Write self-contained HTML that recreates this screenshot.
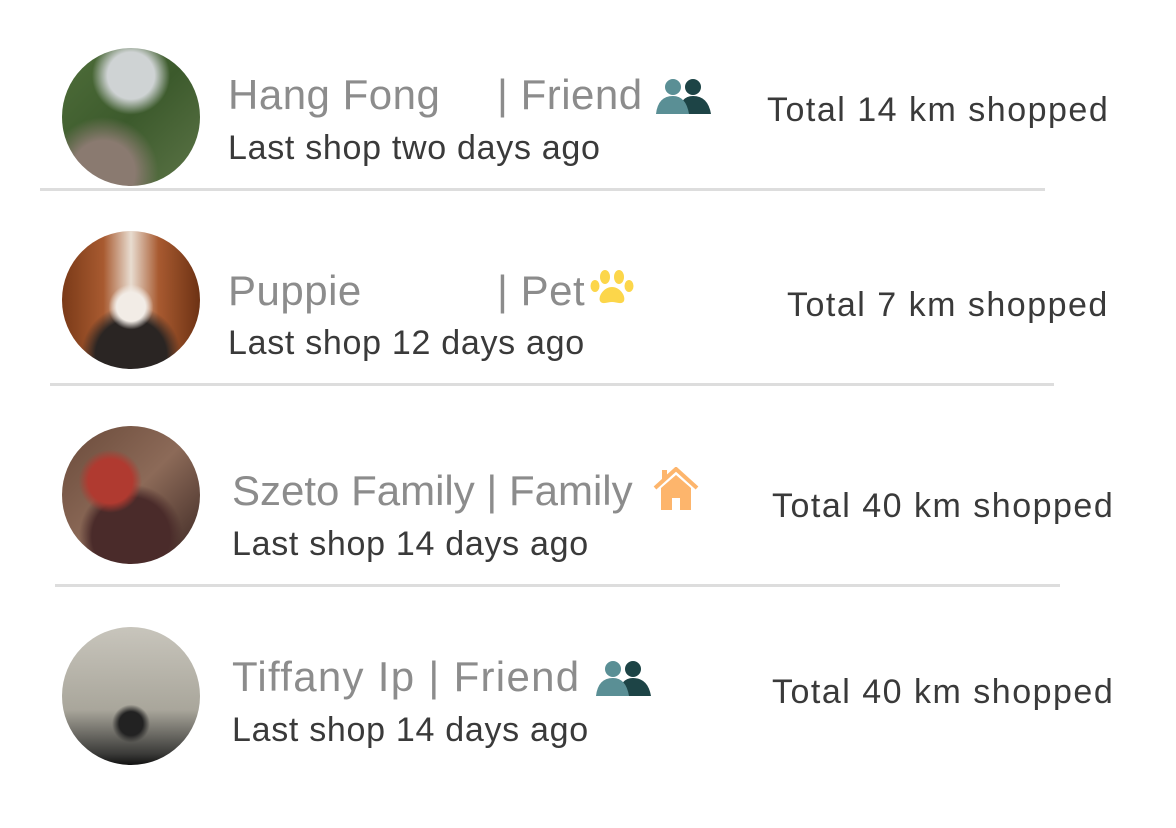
<!DOCTYPE html>
<html><head><meta charset="utf-8"><style>
body{margin:0;width:1176px;height:828px;background:#fff;position:relative;overflow:hidden;font-family:"Liberation Sans",sans-serif}
.a{position:absolute;border-radius:50%;width:138px;height:138px}
.t{position:absolute;font-size:42px;line-height:1;color:#8c8c8c;white-space:nowrap;letter-spacing:0.5px}
.s{position:absolute;font-size:34px;line-height:1;color:#3a3a3a;white-space:nowrap;letter-spacing:0.7px}
.r{position:absolute;font-size:34px;line-height:1;color:#3a3a3a;white-space:nowrap;letter-spacing:1.5px}
.d{position:absolute;height:3px;background:#ddd}
svg{position:absolute}
</style></head><body>
<div class="a" style="left:62px;top:48px;background:radial-gradient(circle at 50% 20%,#cfd3d4 0 18%,transparent 30%),radial-gradient(circle at 30% 90%,#8a7a70 0 20%,transparent 35%),linear-gradient(135deg,#4f6e3a,#3c5a2c 50%,#5c7447)"></div>
<div class="a" style="left:62px;top:231px;background:radial-gradient(circle at 50% 55%,#f2ece6 0 14%,transparent 22%),radial-gradient(circle at 50% 90%,#2a2523 0 25%,transparent 35%),linear-gradient(90deg,#7a3a18,#a85a30 30%,#e8dcd0 50%,#a85a30 70%,#6d3214)"></div>
<div class="a" style="left:62px;top:426px;background:radial-gradient(circle at 35% 40%,#b03a30 0 18%,transparent 26%),radial-gradient(circle at 50% 80%,#4a2b2a 0 30%,transparent 40%),linear-gradient(135deg,#6a4a3a,#8c6a58 50%,#3a2622)"></div>
<div class="a" style="left:62px;top:627px;background:radial-gradient(circle at 50% 70%,#222 0 10%,transparent 16%),linear-gradient(180deg,#c8c5bc,#a9a69b 60%,#3a3a38 92%,#111)"></div>

<div class="t" style="left:228px;top:74px">Hang Fong</div><div class="t" style="left:497px;top:74px">| Friend</div>
<div class="s" style="left:228px;top:131px">Last shop two days ago</div>
<div class="r" style="left:767px;top:93px">Total 14 km shopped</div>
<svg style="left:656px;top:78px" width="56" height="36" viewBox="0 0 56 36"><circle cx="37" cy="9" r="8" fill="#1d4446"/><path d="M22 36 Q24 18 37 18 Q52 18 55 36Z" fill="#1d4446"/><circle cx="17" cy="9" r="8" fill="#5a8f95"/><path d="M0 36 Q2 18 17 18 Q30 18 33 36Z" fill="#5a8f95"/></svg>
<div class="d" style="left:40px;top:188px;width:1005px"></div>

<div class="t" style="left:228px;top:270px">Puppie</div><div class="t" style="left:497px;top:270px">| Pet</div>
<div class="s" style="left:228px;top:326px">Last shop 12 days ago</div>
<div class="r" style="left:787px;top:288px">Total 7 km shopped</div>
<svg style="left:590px;top:270px" width="44" height="36" viewBox="0 0 44 36"><ellipse cx="5" cy="16" rx="4.5" ry="6" fill="#fcd64a"/><ellipse cx="15" cy="7" rx="5" ry="7" fill="#fcd64a"/><ellipse cx="29" cy="7" rx="5" ry="7" fill="#fcd64a"/><ellipse cx="39" cy="16" rx="4.5" ry="6" fill="#fcd64a"/><path d="M22 17 C14 17 8 26 10 31 C12 35 18 32 22 32 C26 32 32 35 34 31 C36 26 30 17 22 17Z" fill="#fcd64a"/></svg>
<div class="d" style="left:50px;top:383px;width:1004px"></div>

<div class="t" style="left:232px;top:470px;letter-spacing:0px">Szeto Family | Family</div>
<div class="s" style="left:232px;top:527px">Last shop 14 days ago</div>
<div class="r" style="left:772px;top:489px">Total 40 km shopped</div>
<svg style="left:653px;top:467px" width="46" height="44" viewBox="0 0 46 44"><path d="M2 21 L23 2 L44 21" stroke="#fdb56c" stroke-width="4" fill="none"/><rect x="9" y="3" width="5" height="9" fill="#fdb56c"/><path d="M8 21 L23 8 L38 21 V43 H27 V31 H19 V43 H8Z" fill="#fdb56c"/></svg>
<div class="d" style="left:55px;top:584px;width:1005px"></div>

<div class="t" style="left:232px;top:656px;letter-spacing:1.3px">Tiffany Ip | Friend</div>
<div class="s" style="left:232px;top:713px">Last shop 14 days ago</div>
<div class="r" style="left:772px;top:675px">Total 40 km shopped</div>
<svg style="left:596px;top:660px" width="56" height="36" viewBox="0 0 56 36"><circle cx="37" cy="9" r="8" fill="#1d4446"/><path d="M22 36 Q24 18 37 18 Q52 18 55 36Z" fill="#1d4446"/><circle cx="17" cy="9" r="8" fill="#5a8f95"/><path d="M0 36 Q2 18 17 18 Q30 18 33 36Z" fill="#5a8f95"/></svg>
</body></html>
